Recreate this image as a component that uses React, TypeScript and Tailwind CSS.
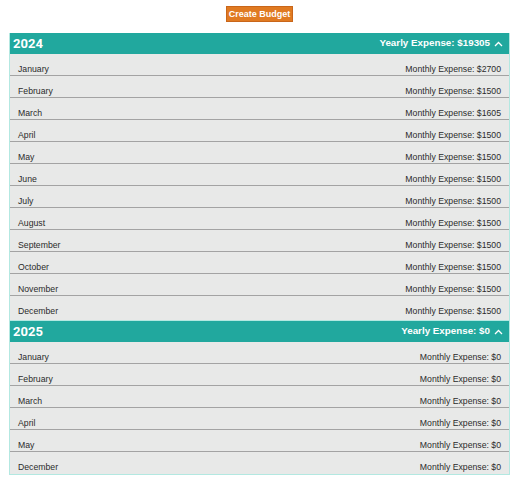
const budgets = [
  {
    year: 2024,
    months: [
      { name: "January", amount: 2700 },
      { name: "February", amount: 1500 },
      { name: "March", amount: 1605 },
      { name: "April", amount: 1500 },
      { name: "May", amount: 1500 },
      { name: "June", amount: 1500 },
      { name: "July", amount: 1500 },
      { name: "August", amount: 1500 },
      { name: "September", amount: 1500 },
      { name: "October", amount: 1500 },
      { name: "November", amount: 1500 },
      { name: "December", amount: 1500 },
    ],
  },
  {
    year: 2025,
    months: [
      { name: "January", amount: 0 },
      { name: "February", amount: 0 },
      { name: "March", amount: 0 },
      { name: "April", amount: 0 },
      { name: "May", amount: 0 },
      { name: "December", amount: 0 },
    ],
  },
];

type Budget = (typeof budgets)[number];

const ChevronUp = () => (
  <svg width="9" height="6" viewBox="0 0 9 6" fill="none" className="ml-[4px]">
    <path d="M1 5L4.5 1.5L8 5" stroke="white" strokeWidth="1.3" />
  </svg>
);

const YearSection = ({ year, months }: Budget) => {
  const total = months.reduce((s, m) => s + m.amount, 0);
  return (
    <section className="border-x border-b border-[#b3e8e1]">
      <div className="flex h-[21px] items-center justify-between bg-[#21a89e] pl-[3px] pr-[6px] text-white">
        <h2 className="font-['Roboto',sans-serif] text-[13px] font-bold leading-none">{year}</h2>
        <div className="flex items-center font-['Liberation_Sans',Arial,sans-serif] text-[9.8px] font-bold">
          Yearly Expense: ${total}
          <ChevronUp />
        </div>
      </div>
      {months.map((m, i) => (
        <div
          key={m.name}
          className={
            i === months.length - 1
              ? year === 2024
                ? "flex h-[24px] justify-between bg-[#e8e9e8] px-[8px] pt-[10px] leading-[11px]"
                : "flex h-[22px] justify-between bg-[#e8e9e8] px-[8px] pt-[10px] leading-[11px]"
              : "flex h-[22px] justify-between border-b border-[#a3a3a3] bg-[#e8e9e8] px-[8px] pt-[10px] leading-[11px]"
          }
        >
          <span>{m.name}</span>
          <span>Monthly Expense: ${m.amount}</span>
        </div>
      ))}
    </section>
  );
};

export default function App() {
  return (
    <div className="h-[482px] w-[518px] bg-white pl-[9px] pr-[8px] font-['Liberation_Sans',Arial,sans-serif] text-[8.7px] text-[#2b2b2b]">
      <div className="flex h-[33px] justify-center pt-[6px]">
        <button className="h-[16px] border border-[#c9661a] bg-[#e07a22] px-[2px] text-[9px] font-bold leading-none text-white">
          Create Budget
        </button>
      </div>
      {budgets.map((b) => (
        <YearSection key={b.year} {...b} />
      ))}
    </div>
  );
}
